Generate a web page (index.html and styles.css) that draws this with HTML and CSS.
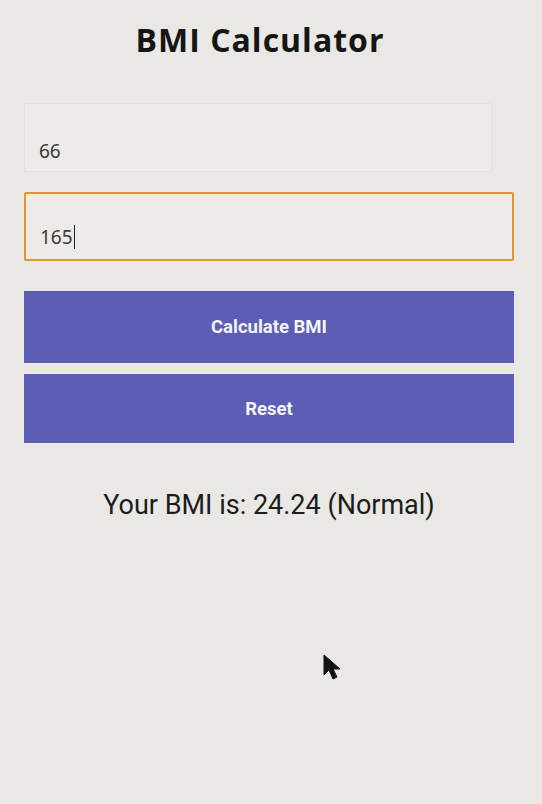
FILE: index.html
```html
<!DOCTYPE html>
<html>
<head>
<meta charset="utf-8">
<link rel="stylesheet" href="styles.css">
</head>
<body>
<main class="app">
  <h1 class="title">BMI Calculator</h1>
  <div class="field field-plain"><span class="value">66</span></div>
  <div class="field field-focus"><span class="value">165</span><span class="caret"></span></div>
  <button class="btn btn-calc">Calculate BMI</button>
  <button class="btn btn-reset">Reset</button>
  <p class="result">Your BMI is: 24.24 (Normal)</p>
</main>
<svg class="pointer" width="22" height="30" viewBox="0 0 22 30">
  <path d="M1 1 L1 21 L6 16 L10 25 L14 23 L10 15 L17 15 Z" fill="#111" stroke="#111" stroke-width="1" stroke-linejoin="round"/>
</svg>
</body>
</html>
```
FILE: styles.css
```css
html, body {
  margin: 0;
  padding: 0;
}
body {
  background: #e9e8e4;
  font-family: Roboto, "Liberation Sans", sans-serif;
  color: #1a1a1a;
  width: 542px;
  height: 804px;
  overflow: hidden;
  position: relative;
}
.app {
  display: flex;
  flex-direction: column;
  padding: 0 28px 0 24px;
}
.title {
  margin: 18px 0 0 0;
  text-align: center;
  font-family: "Open Sans", Roboto, sans-serif;
  font-size: 32px;
  line-height: 44px;
  font-weight: 700;
  letter-spacing: 1px;
  color: #151515;
  padding-right: 18px;
}
.field {
  box-sizing: border-box;
  display: flex;
  align-items: center;
  padding: 0 14px;
  background: #ecebe8;
  font-family: "Noto Sans", Roboto, sans-serif;
  font-size: 19px;
  color: #3a3a3a;
}
.field-plain {
  margin-top: 41px;
  height: 69px;
  border: 1px solid #e2e1dd;
  margin-right: 22px;
  padding-top: 26px;
}
.field-focus {
  margin-top: 20px;
  height: 69px;
  border: 2px solid #e8922f;
  border-radius: 2px;
  padding-top: 20px;
}
.caret {
  display: inline-block;
  width: 1.5px;
  height: 24px;
  background: #222;
  margin-left: 1px;
}
.btn {
  box-sizing: border-box;
  border: none;
  background: #5b5eb4;
  color: #f4f4f8;
  font-family: Roboto, "Liberation Sans", sans-serif;
  font-weight: 700;
  font-size: 18.5px;
  width: 100%;
  padding: 0;
}
.btn-calc {
  margin-top: 30px;
  height: 72px;
}
.btn-reset {
  margin-top: 11px;
  height: 69px;
}
.result {
  margin: 43px 0 0 0;
  text-align: center;
  font-size: 27px;
  line-height: 38px;
  color: #1c1c1c;
}
.pointer {
  position: absolute;
  left: 323px;
  top: 654px;
}
```
